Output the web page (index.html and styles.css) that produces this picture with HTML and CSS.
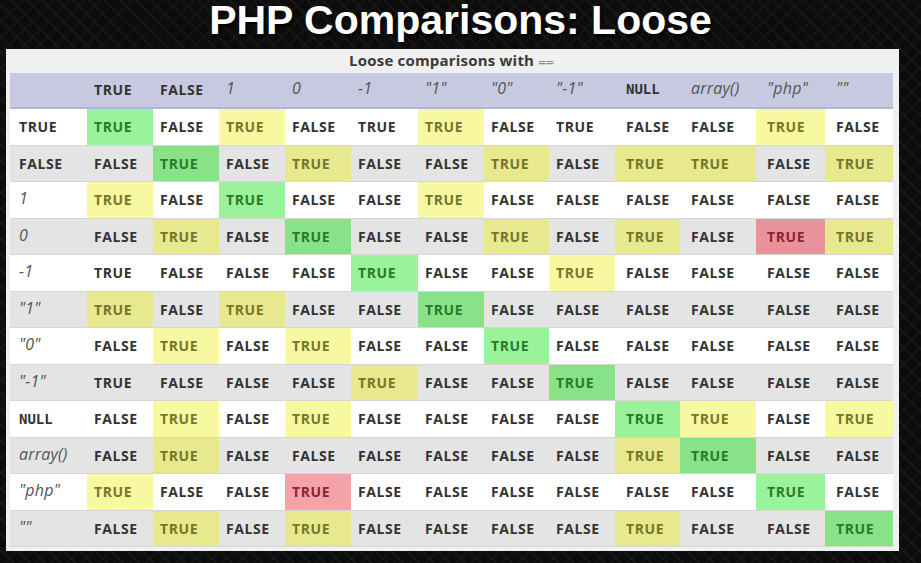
FILE: index.html
```html
<!DOCTYPE html>
<html>
<head>
  <meta charset="UTF-8">
  <title>PHP Comparisons: Loose</title>
  <link rel="stylesheet" href="styles.css">
</head>
<body>
  <h1 class="slide-title">PHP Comparisons: Loose</h1>

  <div class="table-panel">
    <table class="cmp-table">
      <caption>Loose comparisons with <code>==</code></caption>
      <colgroup>
        <col style="width:77px"><col style="width:66px"><col style="width:66px"><col style="width:66px">
        <col style="width:66px"><col style="width:67px"><col style="width:66px"><col style="width:65px">
        <col style="width:66px"><col style="width:65px"><col style="width:76px"><col style="width:69px">
        <col style="width:68px">
      </colgroup>
      <thead>
        <tr>
          <th></th>
          <th class="b">TRUE</th>
          <th class="b">FALSE</th>
          <th class="i">1</th>
          <th class="i">0</th>
          <th class="i">-1</th>
          <th class="i">"1"</th>
          <th class="i">"0"</th>
          <th class="i">"-1"</th>
          <th class="b mono">NULL</th>
          <th class="i">array()</th>
          <th class="i">"php"</th>
          <th class="i">""</th>
        </tr>
      </thead>
      <tbody id="cmp-body"></tbody>
    </table>
  </div>

  <script>
    // rows: label, label style, then 12 cells (g = identical, y = loose match, r = odd match, T = plain TRUE, - = FALSE)
    var rows = [
      ['TRUE', 'b', 'g - y - T y - T - - y -'],
      ['FALSE', 'b', '- g - y - - y - y y - y'],
      ['1', 'i', 'y - g - - y - - - - - -'],
      ['0', 'i', '- y - g - - y - y - r y'],
      ['-1', 'i', 'T - - - g - - y - - - -'],
      ['"1"', 'i', 'y - y - - g - - - - - -'],
      ['"0"', 'i', '- y - y - - g - - - - -'],
      ['"-1"', 'i', 'T - - - y - - g - - - -'],
      ['NULL', 'b mono', '- y - y - - - - g y - y'],
      ['array()', 'i', '- y - - - - - - y g - -'],
      ['"php"', 'i', 'y - - r - - - - - - g -'],
      ['""', 'i', '- y - y - - - - y - - g']
    ];

    var body = document.getElementById('cmp-body');
    rows.forEach(function (row) {
      var tr = document.createElement('tr');
      var html = '<td class="' + row[1] + '">' + row[0] + '</td>';
      row[2].split(' ').forEach(function (c) {
        if (c === '-') {
          html += '<td>FALSE</td>';
        } else if (c === 'T') {
          html += '<td>TRUE</td>';
        } else {
          html += '<td class="' + c + '">TRUE</td>';
        }
      });
      tr.innerHTML = html;
      body.appendChild(tr);
    });
  </script>
</body>
</html>
```

FILE: styles.css
```css
html, body {
  margin: 0;
  padding: 0;
}

body {
  background-color: #0c0c0c;
  background-image:
    repeating-linear-gradient(45deg, transparent 0, transparent 9px, #171717 9px, #171717 11px),
    repeating-linear-gradient(-45deg, transparent 0, transparent 9px, #131313 9px, #131313 11px);
  height: 563px;
  overflow: hidden;
  font-family: "Open Sans", Arial, sans-serif;
}

.slide-title {
  margin: 0;
  height: 41px;
  font-family: "Liberation Sans", Arial, sans-serif;
  font-size: 41px;
  line-height: 41px;
  font-weight: bold;
  text-align: center;
  color: #fff;
  text-shadow: 2px 2px 3px #000;
}

.table-panel {
  width: 884px;
  margin: 8px 0 0 6px;
  padding: 0 5px 4px 4px;
  background-color: #f0f0f0;
}

.cmp-table {
  width: 883px;
  table-layout: fixed;
  border-collapse: collapse;
  font-size: 14px;
  letter-spacing: 0.6px;
  color: #333;
}

.cmp-table caption {
  height: 24px;
  line-height: 22px;
  font-size: 15px;
  font-weight: bold;
  letter-spacing: 0.2px;
  color: #3a3a3a;
  text-align: center;
}

.cmp-table caption code {
  font-family: "DejaVu Sans Mono", monospace;
  font-weight: normal;
  font-size: 13px;
  letter-spacing: 0;
  color: #888;
}

.cmp-table th,
.cmp-table td {
  padding: 0 0 0 7px;
  text-align: left;
  white-space: nowrap;
  font-weight: bold;
}

.cmp-table td:nth-child(n+10),
.cmp-table th:nth-child(n+10) {
  padding-left: 11px;
}

.cmp-table td:first-child {
  padding-left: 9px;
}

.cmp-table thead tr {
  background-color: #c6c9df;
}

.cmp-table th {
  height: 32px;
  padding-bottom: 2px;
  border-bottom: 2px solid #b2b6d6;
}

.cmp-table td {
  height: 35.5px;
  border-bottom: 1px solid #d6d6d6;
}

.cmp-table tbody tr {
  background-color: #fff;
}

.cmp-table tbody tr:nth-child(even) {
  background-color: #e4e4e4;
}

.cmp-table .i {
  font-weight: normal;
  font-style: italic;
  font-size: 16px;
  letter-spacing: 0.2px;
  color: #555;
}

.cmp-table td.i {
  height: 32.5px;
  padding-bottom: 3px;
}

.cmp-table th.i {
  height: 30px;
  padding-bottom: 4px;
}

.cmp-table .mono {
  font-family: "DejaVu Sans Mono", monospace;
  font-size: 14px;
  letter-spacing: 0;
}

.cmp-table .g {
  background-color: #9af39a;
  color: #2a7a2a;
}

.cmp-table .y {
  background-color: #f8f8a0;
  color: #76762a;
}

.cmp-table .r {
  background-color: #f5a2aa;
  color: #8c2434;
}

.cmp-table tbody tr:nth-child(even) .g {
  background-color: #88e288;
}

.cmp-table tbody tr:nth-child(even) .y {
  background-color: #e8e88e;
}

.cmp-table tbody tr:nth-child(even) .r {
  background-color: #e8929b;
}
```
